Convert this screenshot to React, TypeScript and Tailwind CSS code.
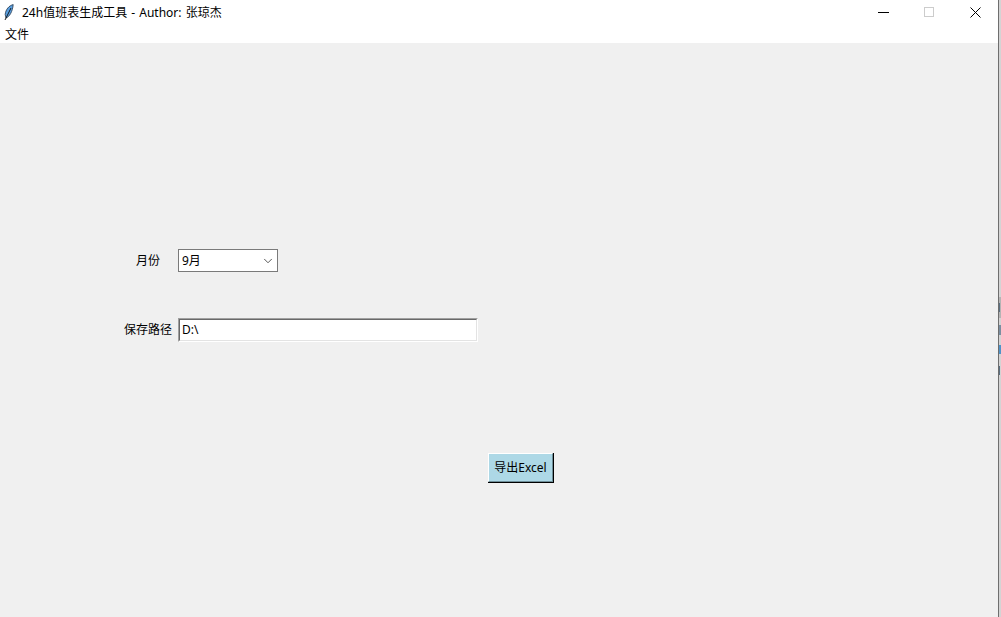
import React from 'react';
import { ChevronDown } from 'lucide-react';

const cjk = "font-['Noto_Sans','Noto_Sans_CJK_SC',sans-serif]";

export default function App() {
  return (
    <div className={`flex h-[617px] w-[1001px] overflow-hidden bg-[#f0f0f0] text-[12px] text-black ${cjk}`}>
      <div className="flex w-[998px] flex-col">
        {/* Title bar */}
        <div className="flex h-[24px] items-center bg-white">
          <svg width="10" height="17" viewBox="0 0 10 17" className="ml-[4px] mr-[8px]">
            <path d="M9.2 0.6 C5 1.6 1.6 5.5 1.2 10.5 L2 14 C5.4 13 8.6 7.5 9.2 0.6Z" fill="#5a9fe0" stroke="#24364a" strokeWidth="0.8" />
            <path d="M7 4 L1 16" stroke="#0c0c0c" strokeWidth="0.9" />
          </svg>
          <span className="relative top-[1px] leading-none [word-spacing:1px]">24h值班表生成工具 - Author: 张琼杰</span>
          <div className="ml-auto flex items-center">
            <svg width="11" height="11" viewBox="0 0 11 11" stroke="#000" fill="none">
              <path d="M0 5.5 H11" />
            </svg>
            <svg width="10" height="10" viewBox="0 0 10 10" stroke="#cccccc" fill="none" className="ml-[35px]">
              <rect x="0.5" y="0.5" width="9" height="9" />
            </svg>
            <svg width="11" height="11" viewBox="0 0 11 11" stroke="#000" fill="none" className="ml-[36px] mr-[17px]">
              <path d="M0.5 0.5 L10.5 10.5 M10.5 0.5 L0.5 10.5" />
            </svg>
          </div>
        </div>
        {/* Menu bar */}
        <div className="flex h-[19px] items-center bg-white pl-[5px]">
          <span className="relative top-[1px] leading-none">文件</span>
        </div>
        {/* Form */}
        <div className="flex flex-1 flex-col pt-[206px]">
          <div className="flex h-[23px] items-center">
            <span className="ml-[136px] w-[42px]">月份</span>
            <div className="flex h-[23px] w-[100px] items-center justify-between border border-[#7a7a7a] bg-white pl-[3px] pr-[2px]">
              <span>9月</span>
              <ChevronDown className="h-[14px] w-[14px] text-[#333333]" strokeWidth={1.4} />
            </div>
          </div>
          <div className="mt-[46px] flex h-[24px] items-center">
            <span className="ml-[124px] w-[54px]">保存路径</span>
            <div className="h-[24px] w-[300px] border border-b-white border-l-[#a0a0a0] border-r-white border-t-[#a0a0a0] bg-white">
              <div className="flex h-full items-center border border-b-[#e3e3e3] border-l-[#696969] border-r-[#e3e3e3] border-t-[#696969] pl-[2px]">D:\</div>
            </div>
          </div>
          <div className="ml-[488px] mt-[111px]">
            <button className="h-[30px] w-[66px] border-b border-r border-b-black border-r-black bg-[#add8e6]">
              <div className="flex h-full items-center justify-center border border-b-[#6f8f99] border-l-white border-r-[#6f8f99] border-t-white">
                导出Excel
              </div>
            </button>
          </div>
        </div>
      </div>
      {/* Edge of the window behind */}
      <div className="w-[1px] bg-[#6e6e6e]" />
      <svg width="2" height="617" viewBox="0 0 2 617" className="block shrink-0">
        <rect width="2" height="617" fill="#d4d4d4" />
        <rect y="297" width="2" height="21" fill="#b4b4b4" />
        <rect y="303" width="1" height="9" fill="#5b6f80" />
        <rect y="325" width="2" height="10" fill="#7a8ea0" />
        <rect y="345" width="2" height="9" fill="#4f93c8" />
        <rect y="366" width="1" height="9" fill="#5b6f80" />
      </svg>
    </div>
  );
}
